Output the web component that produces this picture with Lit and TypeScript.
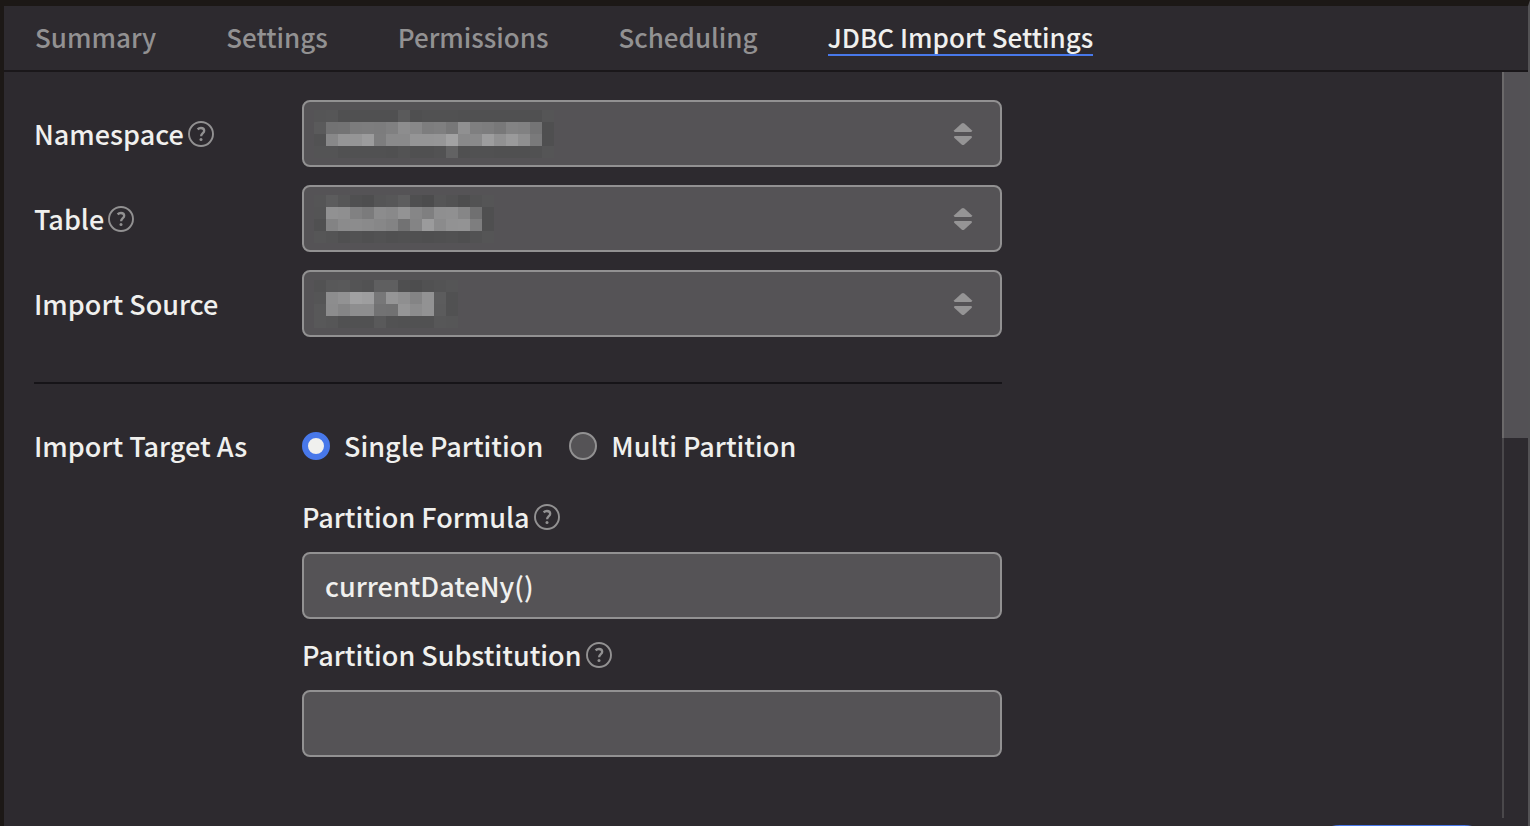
import { LitElement, html, svg, css } from "lit";
import { customElement, property, state } from "lit/decorators.js";

const CELL = 12;

// Each redacted value is a grid of grey levels: faint row, two strong rows, faint row.
const REDACTED: Record<string, number[][]> = {
  namespace: [
    [85, 86, 80, 80, 80, 80, 80, 90, 79, 81, 81, 81, 80, 80, 80, 80, 80, 80, 80, 85],
    [90, 114, 115, 124, 125, 124, 128, 141, 136, 125, 127, 119, 144, 127, 125, 120, 131, 129, 116, 79],
    [82, 136, 149, 149, 156, 125, 138, 138, 149, 149, 150, 162, 137, 138, 157, 145, 154, 143, 122, 79],
    [84, 84, 81, 81, 81, 81, 80, 83, 80, 80, 82, 98, 80, 81, 81, 80, 80, 80, 81, 85],
  ],
  table: [
    [85, 92, 86, 80, 78, 85, 87, 93, 79, 76, 85, 82, 77, 82, 85],
    [84, 145, 143, 129, 123, 140, 137, 147, 134, 127, 143, 144, 134, 112, 79],
    [80, 131, 139, 140, 138, 135, 131, 114, 132, 155, 139, 146, 147, 126, 79],
    [86, 84, 80, 82, 80, 82, 80, 81, 80, 79, 80, 81, 79, 82, 85],
  ],
  source: [
    [82, 88, 89, 84, 82, 95, 95, 79, 77, 81, 83, 85],
    [85, 141, 146, 161, 158, 119, 149, 143, 132, 146, 92, 81],
    [88, 140, 133, 142, 142, 114, 113, 149, 140, 146, 91, 81],
    [88, 86, 81, 81, 81, 89, 82, 81, 81, 81, 87, 86],
  ],
};

@customElement("help-icon")
class HelpIcon extends LitElement {
  static styles = css`
    :host { display: inline-flex; }
  `;
  render() {
    return html`<svg width="26" height="26" viewBox="0 0 26 26" fill="none" stroke="#929192" aria-hidden="true">
      <circle cx="13" cy="13" r="12" stroke-width="1.9"></circle>
      <path d="M9.6 8.4C10.5 7.5 11.6 7 12.9 7C14.9 7 16.2 8.1 16.2 9.8C16.2 12.2 13.1 12.2 13.1 15.3" stroke-width="2.3"></path>
      <circle cx="13" cy="18.4" r="1.5" fill="#929192" stroke="none"></circle>
    </svg>`;
  }
}

@customElement("redacted-select")
class RedactedSelect extends LitElement {
  @property() name = "";
  @property() label = "";
  static styles = css`
    :host { display: block; position: relative; }
    .select {
      appearance: none;
      display: block;
      box-sizing: border-box;
      width: 100%;
      height: 67px;
      margin: 0;
      border: 2px solid #929192;
      border-radius: 8px;
      background: #555356;
      outline: none;
    }
    .mosaic { position: absolute; left: 12px; top: 10px; pointer-events: none; }
    .arrows { position: absolute; right: 29px; top: 22px; pointer-events: none; }
  `;
  render() {
    const rows = REDACTED[this.name] ?? [];
    const cols = rows[0]?.length ?? 0;
    return html`
      <select class="select" aria-label=${this.label}><option></option></select>
      <svg class="mosaic" width=${cols * CELL} height=${4 * CELL} shape-rendering="crispEdges" aria-hidden="true">
        ${rows.map((row, y) => row.map((v, x) => svg`<rect x=${x * CELL} y=${y * CELL} width=${CELL} height=${CELL} fill=${`rgb(${v},${v},${v + 1})`}></rect>`))}
      </svg>
      <svg class="arrows" width="20" height="24" viewBox="0 0 20 24" fill="#959495" aria-hidden="true">
        <path d="M1.2 8.2L8.6 1.6Q10 .6 11.4 1.6L18.8 8.2Q19.5 10 18 10H2Q.5 10 1.2 8.2Z"></path>
        <path d="M1.2 15.8L8.6 22.4Q10 23.4 11.4 22.4L18.8 15.8Q19.5 14 18 14H2Q.5 14 1.2 15.8Z"></path>
      </svg>
    `;
  }
}

@customElement("app-root")
class AppRoot extends LitElement {
  @state() private active = "JDBC Import Settings";
  private tabs = ["Summary", "Settings", "Permissions", "Scheduling", "JDBC Import Settings"];

  static styles = css`
    :host {
      display: flex;
      flex-direction: column;
      box-sizing: border-box;
      height: 100vh;
      overflow: hidden;
      border-top: 6px solid #1c1816;
      border-left: 4px solid #1c1816;
      border-right: 2px solid #535255;
      background: #2d2a2f;
      color: #f0f0ee;
      font: 500 27px/35px "Noto Sans CJK SC", "Noto Sans", sans-serif;
    }
    .tabs {
      display: flex;
      flex: none;
      gap: 70px;
      padding: 13px 31px 14px;
      border-bottom: 2px solid #1a171a;
      font-size: 26px;
    }
    .tab { color: #929192; text-decoration: none; white-space: nowrap; border-bottom: 2px solid transparent; }
    .tab.active { color: #f0f0ee; border-color: #4878ea; }
    .body { display: flex; flex: 1; min-height: 0; }
    .form { flex: 1; min-width: 0; overflow: hidden; padding: 28px 30px; }
    .inner { max-width: 968px; }
    .row { display: grid; grid-template-columns: 268px 1fr; align-items: center; }
    .selects { display: grid; gap: 18px; }
    .label { display: flex; align-items: center; gap: 4px; }
    .rule { border: 0; border-top: 2px solid #161418; margin: 45px 0 44px; }
    .radios { display: flex; gap: 26px; }
    .choice { display: flex; align-items: center; gap: 14px; }
    .radio {
      appearance: none;
      box-sizing: border-box;
      width: 28px;
      height: 28px;
      margin: 0;
      border: 2px solid #929192;
      border-radius: 50%;
      background: #555356;
    }
    .radio:checked { border: 6px solid #4878ea; background: #f0f0ee; }
    .fields { display: grid; gap: 18px; padding: 36px 0 0 268px; }
    .input {
      box-sizing: border-box;
      width: 100%;
      height: 67px;
      margin: 0;
      padding: 0 21px;
      border: 2px solid #929192;
      border-radius: 8px;
      background: #555356;
      color: #f0f0ee;
      font: inherit;
      outline: none;
    }
    .track { flex: none; width: 24px; border-left: 2px solid #4a484b; }
    .thumb { height: 49%; margin-left: -2px; border-left: 2px solid #6b696a; background: #535155; }
    .footer { display: flex; flex: none; justify-content: flex-end; height: 8px; padding: 7px 31px 0; box-sizing: border-box; overflow: hidden; }
    .save { flex: none; width: 190px; height: 66px; border: 0; border-radius: 33px; background: #4878ea; }
  `;

  render() {
    return html`
      <nav class="tabs">
        ${this.tabs.map(
          (t) => html`<a class="tab ${t === this.active ? "active" : ""}" href="#" @click=${(e: Event) => { e.preventDefault(); this.active = t; }}>${t}</a>`
        )}
      </nav>
      <div class="body">
        <main class="form">
          <div class="inner">
            <div class="selects">
              <div class="row"><span class="label">Namespace<help-icon></help-icon></span><redacted-select name="namespace" label="Namespace"></redacted-select></div>
              <div class="row"><span class="label">Table<help-icon></help-icon></span><redacted-select name="table" label="Table"></redacted-select></div>
              <div class="row"><span class="label">Import Source</span><redacted-select name="source" label="Import Source"></redacted-select></div>
            </div>
            <hr class="rule" />
            <div class="row">
              <span class="label" id="target">Import Target As</span>
              <div class="radios" role="radiogroup" aria-labelledby="target">
                <label class="choice"><input class="radio" type="radio" name="target" checked />Single Partition</label>
                <label class="choice"><input class="radio" type="radio" name="target" />Multi Partition</label>
              </div>
            </div>
            <div class="fields">
              <label class="label" for="formula">Partition Formula<help-icon></help-icon></label>
              <input class="input" id="formula" type="text" value="currentDateNy()" />
              <label class="label" for="substitution">Partition Substitution<help-icon></help-icon></label>
              <input class="input" id="substitution" type="text" />
            </div>
          </div>
        </main>
        <div class="track"><div class="thumb"></div></div>
      </div>
      <footer class="footer"><button class="save" aria-label="Save"></button></footer>
    `;
  }
}
